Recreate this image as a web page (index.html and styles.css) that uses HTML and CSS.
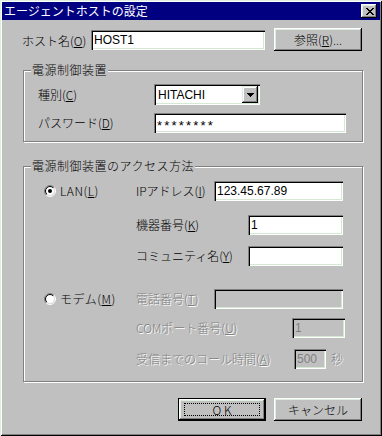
FILE: index.html
```html
<!DOCTYPE html>
<html lang="ja">
<head>
<meta charset="utf-8">
<title>エージェントホストの設定</title>
<link rel="stylesheet" href="styles.css">
</head>
<body>
<div class="window">
  <div class="titlebar">
    <span class="title">エージェントホストの設定</span>
    <div class="close">
      <svg width="8" height="7" viewBox="0 0 8 7" shape-rendering="crispEdges"><path fill="#000" d="M0 0h2v1H0z M6 0h2v1H6z M1 1h2v1H1z M5 1h2v1H5z M2 2h4v1H2z M3 3h2v1H3z M2 4h4v1H2z M1 5h2v1H1z M5 5h2v1H5z M0 6h2v1H0z M6 6h2v1H6z"/></svg>
    </div>
  </div>
  <div class="content">
    <div class="host-row">
      <span class="host-label">ホスト名(<u>O</u>)</span>
      <div class="edit host-edit">HOST1</div>
      <div class="btn browse">参照(<u>R</u>)...</div>
    </div>

    <div class="group group1">
      <div class="group-title">電源制御装置</div>
      <div class="g1-grid">
        <span class="lbl">種別(<u>C</u>)</span>
        <div class="combo">
          <span class="combo-text">HITACHI</span>
          <div class="drop">
            <svg width="7" height="4" viewBox="0 0 7 4" shape-rendering="crispEdges"><path fill="#000" d="M0 0h7v1H0z M1 1h5v1H1z M2 2h3v1H2z M3 3h1v1H3z"/></svg>
          </div>
        </div>
        <span class="lbl">パスワード(<u>D</u>)</span>
        <div class="edit pw-edit">********</div>
      </div>
    </div>

    <div class="group group2">
      <div class="group-title">電源制御装置のアクセス方法</div>

      <div class="section lan">
        <div class="radio">
          <svg width="12" height="12" viewBox="0 0 12 12">
            <defs>
              <linearGradient id="ro1" x1="0" y1="0" x2="1" y2="1"><stop offset="0.5" stop-color="#808080"/><stop offset="0.5" stop-color="#ffffff"/></linearGradient>
              <linearGradient id="ri1" x1="0" y1="0" x2="1" y2="1"><stop offset="0.5" stop-color="#000000"/><stop offset="0.5" stop-color="#dfdfdf"/></linearGradient>
            </defs>
            <circle cx="6" cy="6" r="5.5" fill="none" stroke="url(#ro1)"/>
            <circle cx="6" cy="6" r="4.5" fill="#fff" stroke="url(#ri1)"/>
            <circle cx="6" cy="6" r="2" fill="#000"/>
          </svg>
          <span>LAN(<u>L</u>)</span>
        </div>
        <div class="fields">
          <div class="frow">
            <span class="lbl">IPアドレス(<u>I</u>)</span>
            <div class="edit ip-edit">123.45.67.89</div>
          </div>
          <div class="frow r-kiki">
            <span class="lbl">機器番号(<u>K</u>)</span>
            <div class="edit num-edit">1</div>
          </div>
          <div class="frow r-comm">
            <span class="lbl">コミュニティ名(<u>Y</u>)</span>
            <div class="edit num-edit"></div>
          </div>
        </div>
      </div>

      <div class="section modem">
        <div class="radio">
          <svg width="12" height="12" viewBox="0 0 12 12">
            <defs>
              <linearGradient id="ro2" x1="0" y1="0" x2="1" y2="1"><stop offset="0.5" stop-color="#808080"/><stop offset="0.5" stop-color="#ffffff"/></linearGradient>
              <linearGradient id="ri2" x1="0" y1="0" x2="1" y2="1"><stop offset="0.5" stop-color="#000000"/><stop offset="0.5" stop-color="#dfdfdf"/></linearGradient>
            </defs>
            <circle cx="6" cy="6" r="5.5" fill="none" stroke="url(#ro2)"/>
            <circle cx="6" cy="6" r="4.5" fill="#fff" stroke="url(#ri2)"/>
          </svg>
          <span>モデム(<u>M</u>)</span>
        </div>
        <div class="fields">
          <div class="frow">
            <span class="lbl dis">電話番号(<u>T</u>)</span>
            <div class="edit disabled tel-edit"></div>
          </div>
          <div class="frow r-com">
            <span class="lbl dis">COMポート番号(<u>U</u>)</span>
            <div class="edit disabled com-edit">1</div>
          </div>
          <div class="frow r-call">
            <span class="lbl dis">受信までのコール時間(<u>A</u>)</span>
            <div class="edit disabled sec-edit">500</div>
            <span class="lbl dis sec-unit">秒</span>
          </div>
        </div>
      </div>
    </div>

    <div class="buttons">
      <div class="btn default"><span class="focus">OK</span></div>
      <div class="btn">キャンセル</div>
    </div>
  </div>
</div>
</body>
</html>
```

FILE: styles.css
```css
html, body {
  margin: 0;
  padding: 0;
  background: #c0c0c0;
}

body {
  font-family: "Noto Sans CJK JP", "Noto Sans", sans-serif;
  font-size: 12px;
  font-weight: 300;
  line-height: 14px;
  color: #000;
}

u {
  text-decoration: underline;
  text-underline-offset: 1px;
}

.window {
  width: 382px;
  height: 436px;
  box-sizing: border-box;
  padding: 2px;
  background: #c0c0c0;
  box-shadow:
    inset 1px 1px 0 #dfefdf,
    inset -1px -1px 0 #000,
    inset 2px 2px 0 #fff,
    inset -2px -2px 0 #808080;
}

.titlebar {
  height: 18px;
  background: #000080;
  color: #fff;
  display: flex;
  align-items: center;
  padding: 0 3px 0 2px;
}

.title {
  font-size: 12px;
  line-height: 14px;
  font-weight: 400;
}

.close {
  margin-left: auto;
  width: 16px;
  height: 14px;
  box-sizing: border-box;
  background: #c0c0c0;
  display: flex;
  align-items: center;
  justify-content: center;
  padding-left: 1px;
  box-shadow:
    inset -1px -1px 0 #000,
    inset 1px 1px 0 #fff,
    inset -2px -2px 0 #808080,
    inset 2px 2px 0 #dfefdf;
}

.close svg {
  display: block;
}

.content {
  padding: 8px 18px 0 19px;
  display: flex;
  flex-direction: column;
}

/* ---------- host row ---------- */
.host-row {
  display: flex;
  align-items: center;
  height: 23px;
}

.host-label {
  width: 69px;
  margin-left: 1px;
  padding-top: 2px;
}

.host-edit {
  width: 174px;
}

.browse {
  margin-left: 9px;
}

/* ---------- edits ---------- */
.edit {
  height: 20px;
  box-sizing: border-box;
  background: #fff;
  padding: 0 3px;
  display: flex;
  align-items: center;
  font-family: "Liberation Sans", Arial, sans-serif;
  font-size: 12px;
  font-weight: 400;
  box-shadow:
    inset 1px 1px 0 #808080,
    inset 2px 2px 0 #000,
    inset -1px -1px 0 #fff,
    inset -2px -2px 0 #d4e8d4;
}

.edit.disabled {
  background: #c0c0c0;
  color: #808080;
}

.pw-edit {
  width: 192px;
  letter-spacing: 2.2px;
  padding-top: 5px;
  font-size: 13px;
}

/* ---------- buttons ---------- */
.btn {
  width: 88px;
  height: 23px;
  box-sizing: border-box;
  background: #c0c0c0;
  display: flex;
  align-items: center;
  justify-content: center;
  box-shadow:
    inset -1px -1px 0 #000,
    inset 1px 1px 0 #fff,
    inset -2px -2px 0 #808080,
    inset 2px 2px 0 #dfefdf;
}

.btn.default {
  border: 1px solid #000;
}

.btn.default .focus {
  width: 76px;
  height: 13px;
  box-sizing: border-box;
  border: 1px dotted #000;
  display: flex;
  align-items: center;
  justify-content: center;
  letter-spacing: 3px;
  padding-left: 3px;
}

.buttons {
  display: flex;
  justify-content: flex-end;
  gap: 8px;
  margin-top: 16px;
}

/* ---------- groups ---------- */
.group {
  width: 340px;
  box-sizing: border-box;
  margin-left: 2px;
  border: 1px solid #808080;
  box-shadow: 1px 1px 0 #fff, inset 1px 1px 0 #fff;
  display: flex;
  flex-direction: column;
  align-items: flex-start;
}

.group-title {
  margin-top: -8px;
  padding: 0 1px;
  background: #c0c0c0;
  line-height: 14px;
  letter-spacing: 0.5px;
}

.group1 {
  margin-top: 19px;
  padding: 0 0 8px 14px;
}

.group1 .group-title {
  margin-left: -7px;
}

.g1-grid {
  margin-top: 7px;
  display: grid;
  grid-template-columns: 116px auto;
  grid-template-rows: 21px 20px;
  row-gap: 8px;
  align-items: center;
}

.combo {
  width: 106px;
  height: 21px;
  box-sizing: border-box;
  background: #fff;
  display: flex;
  align-items: center;
  padding: 2px;
  font-family: "Liberation Sans", Arial, sans-serif;
  font-weight: 400;
  box-shadow:
    inset 1px 1px 0 #808080,
    inset 2px 2px 0 #000,
    inset -1px -1px 0 #fff,
    inset -2px -2px 0 #d4e8d4;
}

.combo-text {
  padding-left: 2px;
  flex: 1;
}

.drop {
  width: 16px;
  height: 17px;
  box-sizing: border-box;
  background: #c0c0c0;
  display: flex;
  align-items: center;
  justify-content: center;
  box-shadow:
    inset -1px -1px 0 #000,
    inset 1px 1px 0 #dfefdf,
    inset -2px -2px 0 #808080,
    inset 2px 2px 0 #fff;
}

.drop svg {
  display: block;
}

.group2 {
  margin-top: 24px;
  padding: 0 0 12px 20px;
}

.group2 .group-title {
  margin-left: -13px;
}

.section {
  display: flex;
  align-items: flex-start;
}

.section.lan {
  margin-top: 8px;
}

.section.modem {
  margin-top: 23px;
}

.radio {
  width: 92px;
  height: 20px;
  display: flex;
  align-items: center;
  gap: 4px;
  letter-spacing: 0.5px;
}

.radio svg {
  display: block;
  flex: none;
}

.fields {
  width: 207px;
  display: flex;
  flex-direction: column;
}

.frow {
  display: flex;
  align-items: center;
  height: 20px;
}

.frow .edit {
  margin-left: auto;
}

.r-kiki {
  margin-top: 14px;
}

.r-comm {
  margin-top: 11px;
}

.r-com {
  margin-top: 9px;
}

.r-call {
  margin-top: 11px;
}

.ip-edit,
.tel-edit {
  width: 129px;
}

.num-edit {
  width: 95px;
}

.com-edit {
  width: 53px;
  margin-right: -2px;
}

.sec-edit {
  width: 32px;
}

.sec-unit {
  margin-left: 5px;
}

.lbl {
  white-space: nowrap;
}

.dis {
  color: #808080;
  text-shadow: 1px 1px 0 #fff;
}
```
